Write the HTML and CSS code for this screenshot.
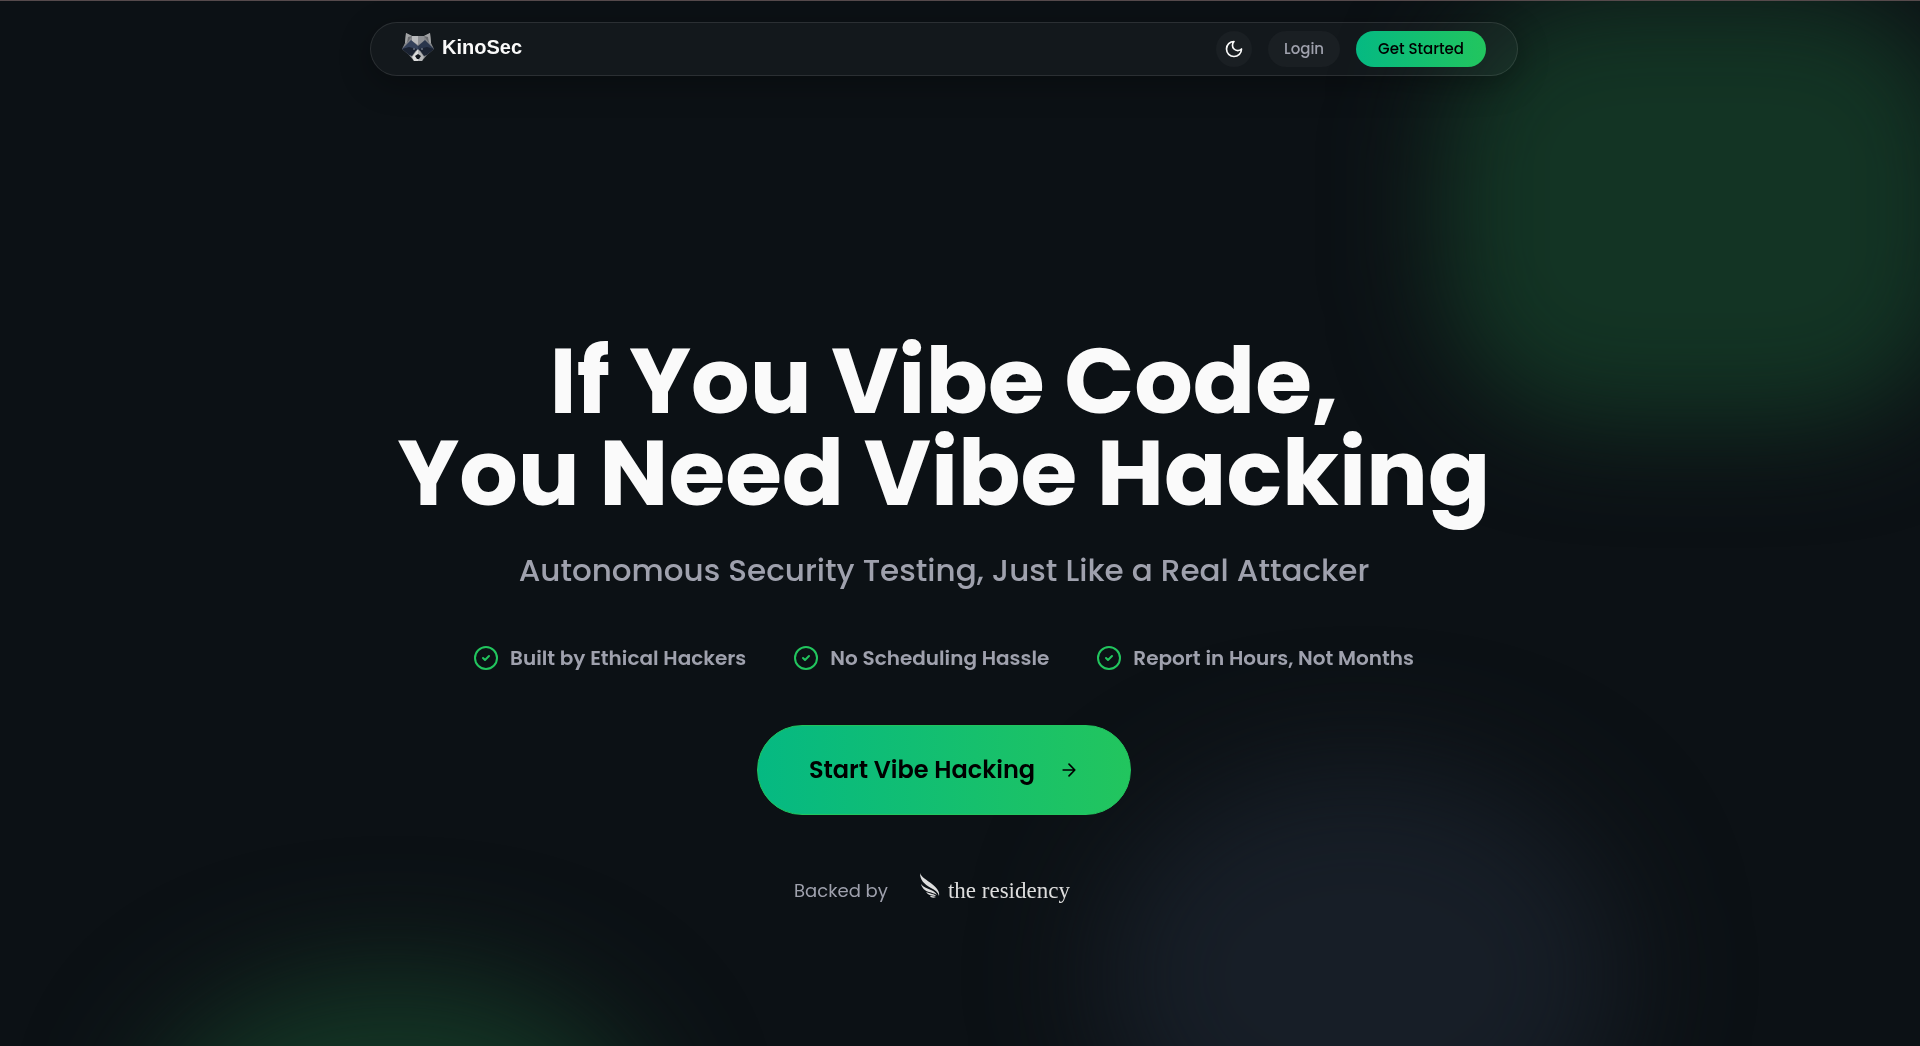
FILE: index.html
```
<!DOCTYPE html>
<html lang="en">
<head>
  <meta charset="UTF-8" />
  <meta name="viewport" content="width=device-width, initial-scale=1.0"/>
  <title>KinoSec</title>
  <link rel="stylesheet" href="styles.css">
</head>
<body>
  <div class="backdrop">
    <div class="glow glow-top"></div>
    <div class="glow glow-left"></div>
    <div class="glow glow-right"></div>
  </div>

  <div class="page">
    <header class="navbar">
      <a href="#" class="brand">
        <svg class="brand-logo" viewBox="0 0 32 28" aria-hidden="true">
          <path fill="#85878b" d="M4 0l6 3h12l6-3 1 10 3 6-7 6-5 6h-8l-5-6-7-6 3-6z"/>
          <path fill="#a2a3a5" d="M4 0l6 3-6 7H3zM28 0l-6 3 6 7h1z"/>
          <path fill="#6a6c70" d="M6 4l4-1-5 7zM26 4l-4-1 5 7z"/>
          <path fill="#b9babc" d="M10 3h6v9l-6-4z"/>
          <path fill="#8e9094" d="M22 3h-6v9l6-4z"/>
          <path fill="#34415a" d="M9 7l7 6v4l-10 3-6-4z"/>
          <path fill="#2a364c" d="M23 7l-7 6v4l10 3 6-4z"/>
          <path fill="#1a2231" d="M0 16l7-2 8 2-5 7-3-1zM32 16l-7-2-8 2 5 7 3-1z"/>
          <path fill="#dcdcdc" d="M16 16l-6 8 2 4h4z"/>
          <path fill="#b5b6b8" d="M16 16l6 8-2 4h-4z"/>
          <path fill="#10141b" d="M16 21l3 2-2 3h-2l-2-3z"/>
          <circle cx="12" cy="16" r="0.7" fill="#b9c2d0"/>
          <circle cx="20" cy="16" r="0.7" fill="#b9c2d0"/>
        </svg>
        <span>KinoSec</span>
      </a>
      <nav class="nav-actions">
        <button class="icon-btn" type="button" aria-label="Toggle theme">
          <svg viewBox="0 0 24 24" aria-hidden="true"><path d="M12 3a6 6 0 0 0 9 9 9 9 0 1 1-9-9Z"/></svg>
        </button>
        <a href="#" class="btn btn-login">Login</a>
        <a href="#" class="btn btn-start">Get Started</a>
      </nav>
    </header>

    <main class="hero">
      <h1>If You Vibe Code,<br>You Need Vibe Hacking</h1>
      <p class="subtitle">Autonomous Security Testing, Just Like a Real Attacker</p>
      <ul class="features">
        <li>
          <svg viewBox="0 0 24 24" aria-hidden="true"><circle cx="12" cy="12" r="11"/><path d="M9 12l2 2 4-4"/></svg>
          Built by Ethical Hackers
        </li>
        <li>
          <svg viewBox="0 0 24 24" aria-hidden="true"><circle cx="12" cy="12" r="11"/><path d="M9 12l2 2 4-4"/></svg>
          No Scheduling Hassle
        </li>
        <li>
          <svg viewBox="0 0 24 24" aria-hidden="true"><circle cx="12" cy="12" r="11"/><path d="M9 12l2 2 4-4"/></svg>
          Report in Hours, Not Months
        </li>
      </ul>
      <a href="#" class="cta">
        Start Vibe Hacking
        <svg viewBox="0 0 24 24" aria-hidden="true"><path d="M5 12h14M12 5l7 7-7 7"/></svg>
      </a>
      <div class="backed">
        <span>Backed by</span>
        <a href="#" class="residency">
          <svg viewBox="0 0 20 25" aria-hidden="true">
            <path d="M0 0c1 4 7 7 12 11 5 4 8 8 7 12-1-4-4-6-8-8C4 11 0 7 0 0z"/>
            <path d="M1 11c2 3 6 4 10 6 3 1 5 3 6 5-3-2-5-2-8-3-4-1-7-4-8-8z"/>
            <path d="M6 19c2 1 4 1 6 2 2 0 3 1 4 2-4 0-8-1-10-4z"/>
            <path d="M10 23c2 0 4 0 6 1-2 1-5 1-6-1z"/>
          </svg>
          <span>the residency</span>
        </a>
      </div>
    </main>
  </div>
</body>
</html>
```
FILE: styles.css
```
* { box-sizing: border-box; }
body {
  margin: 0;
  font-family: Poppins, Inter, sans-serif;
  background: #0c1115;
  color: #fafafa;
}
a { color: inherit; text-decoration: none; }
svg { display: block; flex: none; }

/* background glows */
.backdrop {
  position: fixed;
  inset: 0;
  overflow: hidden;
  border-top: 1px solid #564a4c;
}
.glow {
  position: absolute;
  border-radius: 50%;
}
.glow-top {
  top: -8px;
  right: -40px;
  width: 520px;
  height: 430px;
  border-radius: 160px;
  background: #133424;
  filter: blur(52px);
}
.glow-left {
  left: 144px;
  bottom: -280px;
  width: 500px;
  height: 350px;
  background: #143625;
  filter: blur(60px);
}
.glow-right {
  right: 300px;
  bottom: -140px;
  width: 520px;
  height: 420px;
  background: #171e27;
  filter: blur(60px);
}

.page {
  position: relative;
  padding: 22px 32px 0 0;
}
.navbar {
  display: flex;
  justify-content: space-between;
  align-items: center;
  max-width: 1148px;
  margin: 0 auto;
  padding: 8px 31px;
  border: 1px solid rgba(255,255,255,0.1);
  border-radius: 27px;
  background: rgba(255,255,255,0.03);
  box-shadow: 0 8px 32px rgba(0,0,0,0.3);
}
.brand {
  display: flex;
  align-items: center;
  align-self: flex-start;
  gap: 8px;
  font: bold 20px/32px "Liberation Sans", Arial, sans-serif;
}
.brand-logo { width: 32px; height: 28px; }
.nav-actions {
  display: flex;
  align-items: center;
  gap: 16px;
}
.icon-btn {
  display: grid;
  place-items: center;
  width: 36px;
  height: 36px;
  padding: 0;
  border: none;
  border-radius: 50%;
  background: #1a1f23;
  color: #fafafa;
  cursor: pointer;
}
.icon-btn svg { width: 20px; height: 20px; }
.icon-btn svg, .features svg, .cta svg {
  fill: none;
  stroke: currentColor;
  stroke-width: 2;
  stroke-linecap: round;
  stroke-linejoin: round;
}
.btn {
  border-radius: 18px;
  font-size: 15px;
  font-weight: 500;
  line-height: 36px;
}
.btn-login {
  padding: 0 16px;
  background: #1a1f23;
  color: #9fa1ad;
}
.btn-start {
  padding: 0 22px;
  background: linear-gradient(to right, #05b982, #22c55e);
  color: #000;
}

.hero {
  display: flex;
  flex-direction: column;
  align-items: center;
  padding-top: 259px;
  text-align: center;
}
h1 {
  margin: 0;
  font-size: 92px;
  font-weight: 700;
  line-height: 92px;
}
.subtitle {
  margin: 28px 0 0;
  color: #9fa1ad;
  font-size: 31px;
  font-weight: 500;
  line-height: 46px;
}
.features {
  display: flex;
  gap: 48px;
  margin: 49px 0 0;
  padding: 0;
  list-style: none;
  color: #9fa1ad;
  font-size: 20px;
  font-weight: 600;
  line-height: 32px;
}
.features li {
  display: flex;
  align-items: center;
  gap: 12px;
}
.features svg { width: 24px; height: 24px; color: #22c55e; }
.cta {
  display: flex;
  align-items: center;
  gap: 24px;
  margin-top: 51px;
  padding: 0 51px;
  border: 1px solid #22c55e;
  border-radius: 45px;
  background: linear-gradient(to right, #05b982, #22c55e);
  color: #000;
  font-size: 24px;
  font-weight: 600;
  line-height: 88px;
}
.cta svg { width: 20px; height: 20px; }
.backed {
  display: flex;
  align-items: center;
  gap: 32px;
  margin-top: 56px;
  padding-right: 24px;
  color: #9fa1ad;
  font-size: 18px;
  line-height: 40px;
}
.residency {
  display: flex;
  align-items: center;
  gap: 8px;
  color: #dedede;
  font-family: "Liberation Serif", "Times New Roman", serif;
  font-size: 23px;
}
.residency svg {
  width: 20px;
  height: 25px;
  margin-bottom: 12px;
  fill: currentColor;
}
```
